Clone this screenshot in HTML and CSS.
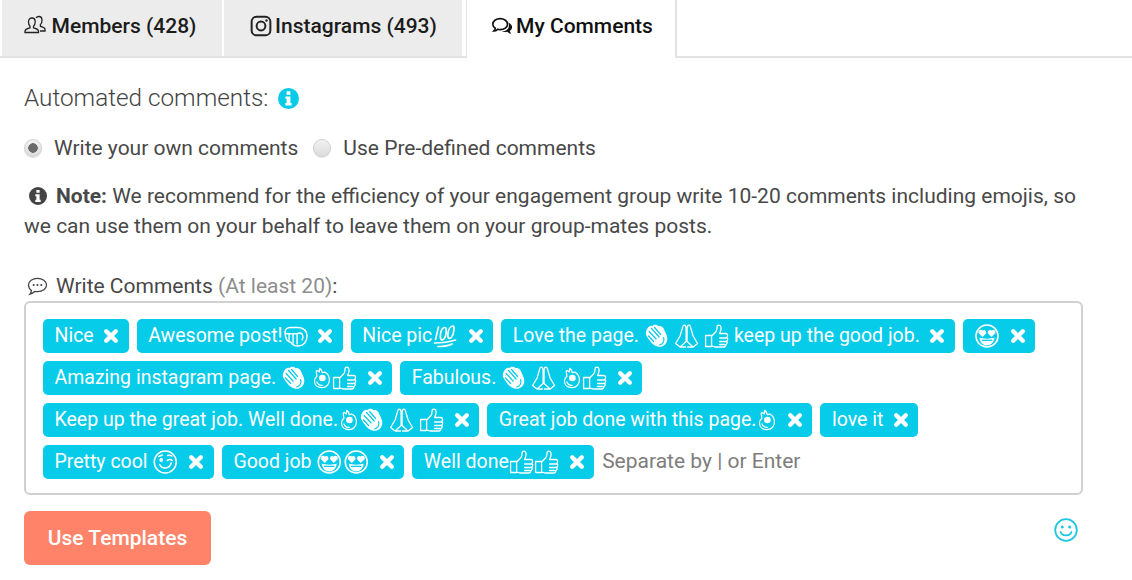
FILE: index.html
```html
<!DOCTYPE html>
<html lang="en">
<head>
<meta charset="utf-8">
<title>My Comments</title>
<link rel="stylesheet" href="styles.css">
</head>
<body>
<svg class="sprite" xmlns="http://www.w3.org/2000/svg">
  <symbol id="clap" viewBox="0 0 24 24">
    <path d="M2.500 5C3.500 2.500 6 1 8 2c1-1.500 4-1.800 6 .3 2-.8 4 .5 5 2.200l2.500 5.500c2 4 1.500 8-1 10.500-3 3-7.500 3-11 .5-3-2-5.500-5.500-7.500-9C.8 10 1 7.500 2.500 5z" fill="#fff"/>
    <path d="M4.500 7.500 11.500 15M7 4.500l7.500 8.500M10 3.500l6 7M4 12l5 5.500M19 13.500c1 3.500-.5 6.500-4 7.500" fill="none" stroke="#06cbe9" stroke-width="1.200" stroke-linecap="round"/>
  </symbol>
  <symbol id="pray" viewBox="0 0 24 24">
    <path d="M11.500 14V5c0-2-1-3.800-2-3.800S8 3 7.500 5L5.500 12 1 19.500 5.500 23l6-5.500zM12.500 14V5c0-2 1-3.800 2-3.800s1.500 1.800 2 3.800l2 7 4.500 7.500-4.500 3.500-6-5.500zM5.500 23h6M18.500 23h-6" fill="none" stroke="#fff" stroke-width="1.300" stroke-linejoin="round"/>
  </symbol>
  <symbol id="thumb" viewBox="0 0 24 24">
    <path d="M1 11.500h6v11H1zM7 12l4-4c1-1.200 1.500-2.500 1.500-5 0-2.500 3.500-2.500 4 .5.300 2-.5 4-1.500 6h6c2.500 0 2.500 3.200 1 3.800 1.500.5 1.500 3.200 0 3.700 1 .8.800 3-.8 3.500.3 1.500-.7 2.500-2.200 2.500H11c-1.500 0-2.500-.8-4-1M15 14h7M15 17.500h7M15 20.500h5" fill="none" stroke="#fff" stroke-width="1.300" stroke-linejoin="round" stroke-linecap="round"/>
  </symbol>
  <symbol id="ok" viewBox="0 0 24 24">
    <path d="M10 1c1.500 1 2.500 3 3 5 2-1 3-1 4 0 2.500 1.500 4 4.500 4 8.500 0 5-3.500 8.500-8.500 8.500S4 20 4 15.500c0-2.500 1-4 2.800-5.500L6 5c-.3-1.500 1.200-2 2-1L9.500 5z" fill="none" stroke="#fff" stroke-width="1.400" stroke-linejoin="round"/>
    <circle cx="13" cy="12" r="3.800" fill="#fff"/>
    <path d="M6.500 16c1 3 4 4.800 7 4.300" fill="none" stroke="#fff" stroke-width="1.300"/>
  </symbol>
  <symbol id="fist" viewBox="0 0 24 24">
    <path d="M1.500 8c0-2.500 2-4.500 5-4.500h8c5.500 0 9 3.500 9 8.500 0 6-4 10-9 10-3.500 0-6-1.500-7-3.500-3.500-.5-6-4-6-10.500z" fill="none" stroke="#fff" stroke-width="1.500" stroke-linejoin="round"/>
    <path d="M5.500 10v6M9.500 10v9M13.500 10v10M17 9c2.500 1 3 4.500 1.500 7M1.500 9.500c5 .5 11 .5 15-.5" fill="none" stroke="#fff" stroke-width="1.400" stroke-linecap="round"/>
  </symbol>
  <symbol id="hundred" viewBox="0 0 24 24">
    <g fill="none" stroke="#fff" stroke-width="1.700" stroke-linecap="round">
      <path d="M5.500 3 2.500 15.500M12 3.500c-2.500 0-4 3-4.500 6.500s0 6 1.500 6 3.500-2.500 4-6 .5-6.500-1-6.500zM20 2c-2.500 0-4.500 3.500-5 7s0 5.500 1.500 5.500 3.500-3 4-6S21.500 2 20 2z"/>
      <path d="M1.500 19c7 0 14-.8 21-3M5 22.500c5 0 10-.5 14-2.500"/>
    </g>
  </symbol>
  <symbol id="hearts" viewBox="0 0 24 24">
    <circle cx="12" cy="12" r="11" fill="none" stroke="#fff" stroke-width="1.600"/>
    <path d="M3.500 9C2.800 6 6 4.700 7.500 6.500 9.500 5 12 7 11 9.500L7.500 13zM13 9.500C12 7 14.500 5 16.500 6.500 18 4.700 21.200 6 20.500 9L16.500 13z" fill="#fff"/>
    <path d="M4.500 13.500c3 1.500 12 1.500 15 0-.3 5-4 8-7.500 8s-7.200-3-7.500-8z" fill="#fff"/>
    <path d="M6.800 16.300h10.400" stroke="#06cbe9" stroke-width="1.300"/>
  </symbol>
  <symbol id="wink" viewBox="0 0 24 24">
    <circle cx="12" cy="12" r="11" fill="none" stroke="#fff" stroke-width="1.500"/>
    <circle cx="8" cy="10" r="1.900" fill="#fff"/>
    <path d="M14 10.500c1.500-1.500 3.500-1.500 5 0M5.500 6.500 9 5M14.500 5.500c1.500-.5 3-.2 4 .5M6.500 14.500c2 4.800 9.500 4.800 11.500-1.500" fill="none" stroke="#fff" stroke-width="1.500" stroke-linecap="round"/>
  </symbol>
  <symbol id="times" viewBox="0 0 14 14">
    <path d="M2.800 2.800 11.200 11.200M11.200 2.800 2.800 11.200" stroke="#fff" stroke-width="3.800" stroke-linecap="round"/>
  </symbol>
  <symbol id="info" viewBox="0 0 20 20">
    <path fill-rule="evenodd" d="M10 0a10 10 0 1 1 0 20 10 10 0 0 1 0-20zM8.200 3.200v3.200h3.600V3.200zM7 8v2.300h1.200v4H7v2.300h6v-2.300h-1.200V8z"/>
  </symbol>
</svg>

<nav class="tabs">
  <a class="tab tab-members">
    <svg class="tab-icon" viewBox="0 0 22 22"><path d="M8 3c2 0 3.200 1.500 3.200 3.800 0 1.800-.7 3.600-1.700 4.400v1.600c2 .8 5 1.500 5 3.200v1.500H1v-1.500c0-1.700 3-2.400 5-3.200v-1.600C5 10.400 4.500 8.600 4.500 6.800 4.500 4.500 6 3 8 3zM12 2.800c.8-.9 1.800-1.300 2.800-1.300 2 0 3.200 1.500 3.200 3.800 0 1.800-.6 3.500-1.600 4.300v1.700c2 .8 4.600 1.400 4.600 3V16h-5" fill="none" stroke="#222" stroke-width="1.300"/></svg>
    Members (428)
  </a>
  <a class="tab tab-instagrams">
    <svg class="tab-icon" viewBox="0 0 20 20"><rect x="1.500" y="1.500" width="17" height="17" rx="4.500" fill="none" stroke="#222" stroke-width="1.800"/><circle cx="10" cy="10" r="4" fill="none" stroke="#222" stroke-width="1.800"/><circle cx="15" cy="5" r="1.100" fill="#222"/></svg>
    Instagrams (493)
  </a>
  <a class="tab tab-active">
    <svg class="tab-icon" viewBox="0 0 24 22"><path d="M10 3c4.500 0 8 2.500 8 6s-3.500 6-8 6c-1 0-2-.1-2.800-.4C6 15.800 4.500 16.500 3 16.500c1-1 1.600-2 1.700-3C3 12.400 2 10.800 2 9c0-3.500 3.500-6 8-6z" fill="none" stroke="#111" stroke-width="1.800"/><path d="M19.500 7.500C21.500 8.700 23 10.300 23 12.300c0 1.700-1 3-2.500 4 .2 1 .7 2 1.700 3-1.700 0-3.200-.8-4.400-2-.8.200-1.800.3-2.800.3-1.300 0-2.500-.2-3.500-.7 3.500 0 8-2 8-6 0-1.300-.1-2-.5-3.400z" fill="#111"/></svg>
    My Comments
  </a>
</nav>

<main class="panel">
  <h2 class="heading">Automated comments: <svg class="heading-info"><use href="#info"/></svg></h2>

  <div class="radios">
    <label class="radio"><input type="radio" name="mode" checked> Write your own comments</label>
    <label class="radio"><input type="radio" name="mode"> Use Pre-defined comments</label>
  </div>

  <p class="note"><svg class="note-info"><use href="#info"/></svg><strong>Note:</strong> We recommend for the efficiency of your engagement group write 10-20 comments including emojis, so we can use them on your behalf to leave them on your group-mates posts.</p>

  <div class="write-label">
    <svg class="chat-icon" viewBox="0 0 22 20"><path d="M11 1.500c5.200 0 9.500 3 9.500 7s-4.300 7-9.500 7c-1 0-2-.1-2.900-.3C6.800 16.500 5 17.500 3 18c.9-1 1.500-2.300 1.600-3.900C2.700 12.800 1.500 10.800 1.500 8.500c0-4 4.300-7 9.500-7z" fill="none" stroke="#444" stroke-width="1.300"/><circle cx="7" cy="8.500" r="1.100" fill="#444"/><circle cx="11" cy="8.500" r="1.100" fill="#444"/><circle cx="15" cy="8.500" r="1.100" fill="#444"/></svg>
    <span>Write Comments <span class="muted">(At least 20)</span>:</span>
  </div>

  <div class="tagbox">
    <span class="tag">Nice<svg class="x"><use href="#times"/></svg></span>
    <span class="tag">Awesome post!<svg class="e"><use href="#fist"/></svg><svg class="x"><use href="#times"/></svg></span>
    <span class="tag">Nice pic<svg class="e e-lg"><use href="#hundred"/></svg><svg class="x"><use href="#times"/></svg></span>
    <span class="tag">Love the page.&nbsp;<svg class="e"><use href="#clap"/></svg>&nbsp;<svg class="e"><use href="#pray"/></svg>&nbsp;<svg class="e"><use href="#thumb"/></svg>&nbsp;keep up the good job.<svg class="x"><use href="#times"/></svg></span>
    <span class="tag"><svg class="e e-lg"><use href="#hearts"/></svg><svg class="x"><use href="#times"/></svg></span>
    <span class="tag">Amazing instagram page.&nbsp;<svg class="e"><use href="#clap"/></svg>&nbsp;<svg class="e e-sm"><use href="#ok"/></svg><svg class="e"><use href="#thumb"/></svg><svg class="x"><use href="#times"/></svg></span>
    <span class="tag">Fabulous.&nbsp;<svg class="e"><use href="#clap"/></svg>&nbsp;<svg class="e"><use href="#pray"/></svg>&nbsp;<svg class="e e-sm"><use href="#ok"/></svg><svg class="e"><use href="#thumb"/></svg><svg class="x"><use href="#times"/></svg></span>
    <span class="tag">Keep up the great job. Well done.<svg class="e e-sm"><use href="#ok"/></svg><svg class="e"><use href="#clap"/></svg>&nbsp;<svg class="e"><use href="#pray"/></svg>&nbsp;<svg class="e"><use href="#thumb"/></svg><svg class="x"><use href="#times"/></svg></span>
    <span class="tag">Great job done with this page.<svg class="e e-sm"><use href="#ok"/></svg><svg class="x"><use href="#times"/></svg></span>
    <span class="tag">love it<svg class="x"><use href="#times"/></svg></span>
    <span class="tag">Pretty cool&nbsp;<svg class="e e-xl"><use href="#wink"/></svg><svg class="x"><use href="#times"/></svg></span>
    <span class="tag">Good job&nbsp;<svg class="e e-xl"><use href="#hearts"/></svg><svg class="e e-xl"><use href="#hearts"/></svg><svg class="x"><use href="#times"/></svg></span>
    <span class="tag">Well done<svg class="e"><use href="#thumb"/></svg><svg class="e"><use href="#thumb"/></svg><svg class="x"><use href="#times"/></svg></span>
    <input class="tag-input" type="text" placeholder="Separate by | or Enter">
  </div>

  <div class="actions">
    <button class="btn" type="button">Use Templates</button>
    <svg class="smile" viewBox="0 0 24 24"><circle cx="12" cy="12" r="10.800" fill="none" stroke="#1fc6e2" stroke-width="1.800"/><circle cx="8.300" cy="9" r="1.500" fill="#1fc6e2"/><circle cx="15.700" cy="9" r="1.500" fill="#1fc6e2"/><path d="M6.500 14c1.500 4.500 9.500 4.500 11 0" fill="none" stroke="#1fc6e2" stroke-width="1.800" stroke-linecap="round"/></svg>
  </div>
</main>
</body>
</html>
```

FILE: styles.css
```css
* { box-sizing: border-box; }

html, body { margin: 0; padding: 0; height: 100%; overflow: hidden; }

body {
  background: #fff;
  color: #484848;
  font-family: Roboto, "Liberation Sans", sans-serif;
  font-size: 21px;
  line-height: 30px;
}

.sprite { display: none; }

.tabs {
  display: flex;
  height: 58px;
  padding-left: 2px;
  gap: 2px;
  border-bottom: 2px solid #e3e3e3;
}

.tab {
  display: flex;
  align-items: center;
  justify-content: center;
  gap: 3px;
  width: 220px;
  height: 56px;
  padding: 0 0 4px;
  background: #ececec;
  color: #1c1c1c;
  font-size: 21px;
  font-weight: 500;
}

.tab-members { gap: 6px; padding-right: 4px; }

.tab-instagrams { width: 238px; margin-right: 2px; padding-left: 1px; }

.tab-active {
  width: 211px;
  height: 58px;
  padding-bottom: 6px;
  padding-left: 2px;
  background: #fff;
  border-left: 1px solid #e3e3e3;
  border-right: 2px solid #e3e3e3;
  color: #111;
}

.tab-icon { width: 22px; height: 22px; flex: none; }

.panel { padding: 0 49px 0 24px; }

.heading {
  display: flex;
  align-items: center;
  gap: 10px;
  margin: 24px 0 0;
  color: #444;
  font-size: 24.300px;
  font-weight: 300;
  line-height: 32px;
}

.heading-info { width: 21px; height: 21px; fill: #07cbe9; }

.radios {
  display: flex;
  gap: 15px;
  margin-top: 19px;
}

.radio { display: flex; align-items: center; gap: 12px; }

.radio input {
  appearance: none;
  margin: 0;
  width: 18px;
  height: 18px;
  border: 1px solid #d0d0d0;
  border-radius: 50%;
  background: linear-gradient(#f2f2f2, #dcdcdc);
  box-shadow: 0 1px 1px rgba(0,0,0,.12);
}

.radio input:checked {
  background: radial-gradient(circle, #6c6c6c 0 4.500px, transparent 5px), linear-gradient(#f2f2f2, #dcdcdc);
}

.note { margin: 18px 0 0; }

.note-info {
  width: 18px;
  height: 18px;
  margin: 0 9px 0 5px;
  vertical-align: -2px;
  fill: #444;
}

.note strong { font-weight: 700; }

.write-label {
  display: flex;
  align-items: center;
  gap: 8px;
  margin-top: 30px;
  padding-left: 3px;
}

.chat-icon { width: 21px; height: 19px; }

.muted { color: #8d8d8d; }

.tagbox {
  display: flex;
  flex-wrap: wrap;
  gap: 8px;
  padding: 16px 17px 14px;
  border: 2px solid #d0d0d0;
  border-radius: 6px;
}

.tag {
  display: inline-flex;
  align-items: center;
  height: 34px;
  padding: 0 9.500px 0 11.500px;
  background: #06cbe9;
  border-radius: 5px;
  color: #fff;
  font-size: 19.500px;
  white-space: nowrap;
}

.e { width: 25.200px; height: 24px; flex: none; }

.e-lg { width: 26px; }

.e-xl { width: 26.500px; }

.e-sm { width: 21px; }

.x { width: 16px; height: 16px; flex: none; margin-left: 9.500px; }

.tag-input {
  flex: 1;
  min-width: 0;
  height: 34px;
  padding: 0 0 2px;
  border: 0;
  outline: 0;
  color: #444;
  font: inherit;
}

.tag-input::placeholder { color: #7d7d7d; opacity: 1; }

.actions {
  display: flex;
  justify-content: space-between;
  align-items: flex-start;
  margin-top: 16px;
  padding-right: 5px;
}

.btn {
  width: 187px;
  height: 54px;
  border: 0;
  border-radius: 6px;
  background: #ff8369;
  color: #fff;
  font: 500 21px Roboto, "Liberation Sans", sans-serif;
}

.smile { width: 24px; height: 24px; margin-top: 7px; }
```
